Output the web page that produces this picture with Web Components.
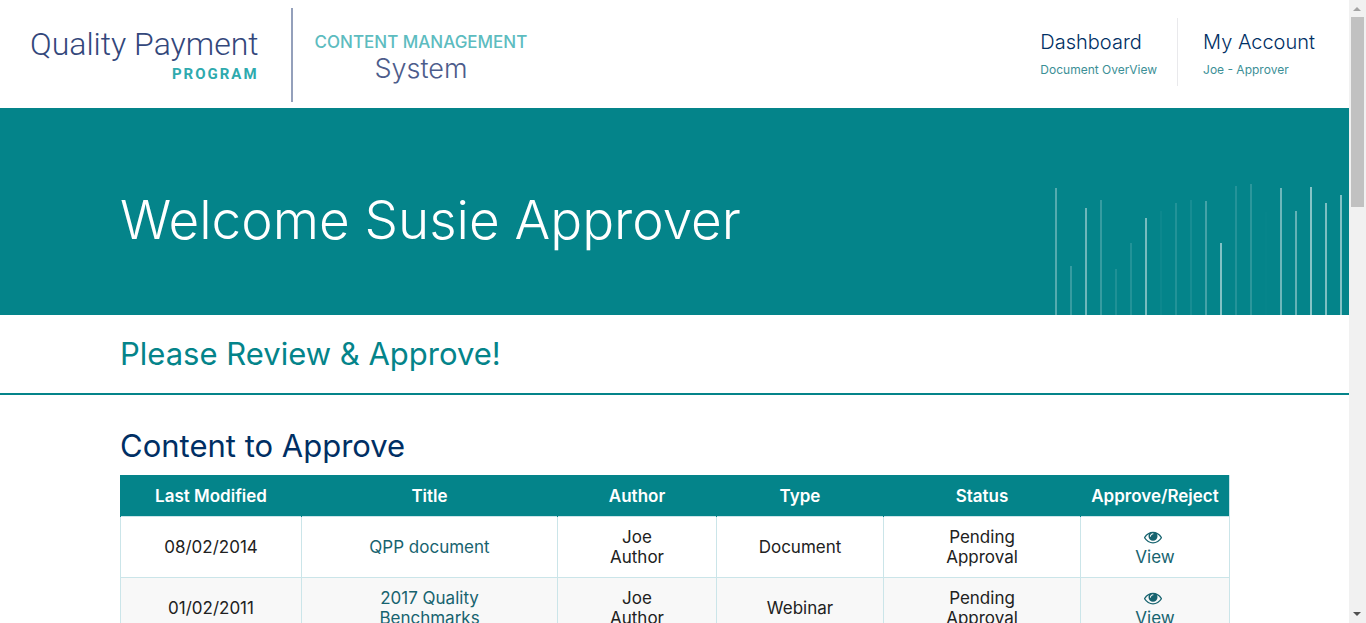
<!DOCTYPE html>
<html lang="en">
<head>
<meta charset="utf-8">
<title>Quality Payment Program - Content Management System</title>
<style>
  body {
    margin: 0;
    font-family: Inter, "Liberation Sans", sans-serif;
    color: #212121;
    background: #fff;
    --teal: #04848a;
    --navy: #002f64;
    --link: #17636f;
  }
</style>
</head>
<body>
<app-shell>
  <site-header>
    <brand-logo slot="brand"></brand-logo>
    <nav-item slot="nav" href="#dashboard" note="Document OverView">Dashboard</nav-item>
    <nav-item slot="nav" href="#account" note="Joe - Approver">My Account</nav-item>
  </site-header>
  <welcome-banner>Welcome Susie Approver</welcome-banner>
  <section-title>Please Review &amp; Approve!</section-title>
  <approval-list>Content to Approve</approval-list>
</app-shell>

<script>
  function define(name, html, setup) {
    const template = document.createElement('template');
    template.innerHTML = html;
    customElements.define(name, class extends HTMLElement {
      connectedCallback() {
        if (this.shadowRoot) return;
        const root = this.attachShadow({ mode: 'open' });
        root.append(template.content.cloneNode(true));
        if (setup) setup(this, root);
      }
    });
  }

  define('scroll-rail', `
    <style>
      :host { display: flex; flex-direction: column; align-items: center; width: 17px; flex: none; background: #f1f1f1; }
      svg { display: block; width: 17px; height: 17px; flex: none; }
      .track { flex: 1; align-self: stretch; padding: 0 2px; }
      .thumb { height: 190px; background: #c1c1c1; }
    </style>
    <svg viewBox="0 0 17 17"><path d="M4 11h8L8 7z" fill="#a3a3a3"/></svg>
    <div class="track"><div class="thumb"></div></div>
    <svg viewBox="0 0 17 17"><path d="M4 6h8l-4 4z" fill="#505050"/></svg>
  `);

  define('app-shell', `
    <style>
      :host { display: flex; height: 100vh; overflow: hidden; }
      .page { flex: 1; min-width: 0; overflow: hidden; }
    </style>
    <div class="page"><slot></slot></div>
    <scroll-rail></scroll-rail>
  `);

  define('brand-logo', `
    <style>
      :host { display: flex; }
      a { display: block; color: #33477b; text-decoration: none; }
      .qpp { padding: 18px 32px 0 30px; text-align: right; font-family: Roboto, sans-serif; }
      .name { font-size: 32px; line-height: 36px; font-weight: 300; }
      .program { font-size: 15px; line-height: 24px; font-weight: 700; letter-spacing: 2px; color: #2eaaae; }
      .cms { height: 94px; box-sizing: border-box; padding: 21px 0 0 22px; border-left: 2px solid #94a0bb; }
      .content { font-size: 17px; line-height: 26px; color: #5dbcbf; font-weight: 500; }
      .system { font-size: 27px; line-height: 28px; font-weight: 300; color: #4c5c8b; text-align: center; }
    </style>
    <a class="qpp" href="#home">
      <div class="name">Quality Payment</div>
      <div class="program">PROGRAM</div>
    </a>
    <div class="cms">
      <div class="content">CONTENT MANAGEMENT</div>
      <div class="system">System</div>
    </div>
  `);

  define('nav-item', `
    <style>
      :host { display: block; box-sizing: border-box; height: 68px; padding: 10px 20px 0 25px; }
      :host(:not(:last-child)) { border-right: 1px solid #e9e9ec; }
      a { color: var(--navy); text-decoration: none; }
      .label { font-size: 20px; line-height: 28px; font-weight: 300; }
      .note { padding-top: 4px; font-size: 12px; line-height: 20px; font-weight: 400; color: #3c8f96; }
    </style>
    <a><div class="label"><slot></slot></div><div class="note"></div></a>
  `, (host, root) => {
    root.querySelector('a').href = host.getAttribute('href');
    root.querySelector('.note').textContent = host.getAttribute('note');
  });

  define('site-header', `
    <style>
      :host { display: flex; justify-content: space-between; padding: 8px 14px 6px 0; white-space: nowrap; }
      nav { display: flex; padding-top: 10px; }
    </style>
    <slot name="brand"></slot>
    <nav><slot name="nav"></slot></nav>
  `);

  define('bar-pattern', `
    <style>
      :host { display: flex; align-items: flex-end; gap: 13px; }
      i { width: 2px; background: #fff; }
    </style>
  `, (host, root) => {
    const bars = [
      [127, 32], [49, 20], [107, 42], [115, 20], [46, 11], [72, 12], [97, 46],
      [104, 4], [112, 12], [115, 8], [114, 26], [72, 50], [129, 13], [131, 16],
      [103, 1], [127, 42], [104, 38], [128, 52], [112, 48], [120, 50]
    ];
    for (const [height, opacity] of bars) {
      const bar = document.createElement('i');
      bar.style.height = height + 'px';
      bar.style.opacity = opacity + '%';
      root.append(bar);
    }
  });

  define('welcome-banner', `
    <style>
      :host { display: flex; justify-content: space-between; align-items: flex-end; background: var(--teal); padding: 76px 7px 0 120px; }
      h1 { margin: 0; padding-bottom: 59px; font-size: 53px; line-height: 72px; font-weight: 300; color: #fff; white-space: nowrap; }
    </style>
    <h1><slot></slot></h1>
    <bar-pattern></bar-pattern>
  `);

  define('section-title', `
    <style>
      :host { display: block; padding: 19px 120px; border-bottom: 2px solid var(--teal); }
      h2 { margin: 0; font-size: 31px; line-height: 40px; font-weight: 400; color: var(--teal); }
    </style>
    <h2><slot></slot></h2>
  `);

  define('view-link', `
    <style>
      :host { display: block; }
      a { color: var(--link); text-decoration: none; }
      svg { display: block; width: 18px; height: 20px; margin: 0 auto; padding-right: 4px; fill: currentColor; }
    </style>
    <a href="#view">
      <svg viewBox="0 0 1792 1792"><path d="M1664 960q-152-236-381-353 61 104 61 225 0 185-131.5 316.5t-316.5 131.5-316.5-131.5-131.5-316.5q0-121 61-225-229 117-381 353 133 205 333.5 326.5t434.5 121.5 434.5-121.5 333.5-326.5zm-720-384q0-20-14-34t-34-14q-125 0-214.5 89.5t-89.5 214.5q0 20 14 34t34 14 34-14 14-34q0-86 61-147t147-61q20 0 34-14t14-34zm848 384q0 34-20 69-140 230-376.5 368.5t-499.5 138.5-499.5-139-376.5-368q-20-35-20-69t20-69q140-229 376.5-368t499.5-139 499.5 139 376.5 368q20 35 20 69z"/></svg>
      View
    </a>
  `);

  define('approval-list', `
    <style>
      :host { display: block; padding: 31px 120px 40px; }
      h2 { margin: 0 0 9px; font-size: 31px; line-height: 40px; font-weight: 400; color: var(--navy); }
      table { width: 100%; table-layout: fixed; border-collapse: collapse; font-size: 17px; line-height: 20px; text-align: center; }
      th { padding: 11px 0 10px; background: var(--teal); color: #fff; font-weight: 600; border-left: 1px solid var(--teal); }
      th:last-child { border-right: 1px solid #cbe5e9; }
      td { padding: 10px 30px; border: 1px solid #cbe5e9; font-weight: 400; }
      tbody tr:nth-child(even) { background: #f8f8f8; }
      td a { color: var(--link); text-decoration: none; }
    </style>
    <h2><slot></slot></h2>
    <table>
      <colgroup>
        <col style="width:181px"><col style="width:256px"><col style="width:159px">
        <col style="width:167px"><col style="width:197px"><col style="width:149px">
      </colgroup>
      <thead>
        <tr><th>Last Modified</th><th>Title</th><th>Author</th><th>Type</th><th>Status</th><th>Approve/Reject</th></tr>
      </thead>
      <tbody>
        <tr>
          <td>08/02/2014</td><td><a href="#doc">QPP document</a></td><td>Joe<br>Author</td>
          <td>Document</td><td>Pending<br>Approval</td><td><view-link></view-link></td>
        </tr>
        <tr>
          <td>01/02/2011</td><td><a href="#doc">2017 Quality<br>Benchmarks</a></td><td>Joe<br>Author</td>
          <td>Webinar</td><td>Pending<br>Approval</td><td><view-link></view-link></td>
        </tr>
      </tbody>
    </table>
  `);
</script>
</body>
</html>
